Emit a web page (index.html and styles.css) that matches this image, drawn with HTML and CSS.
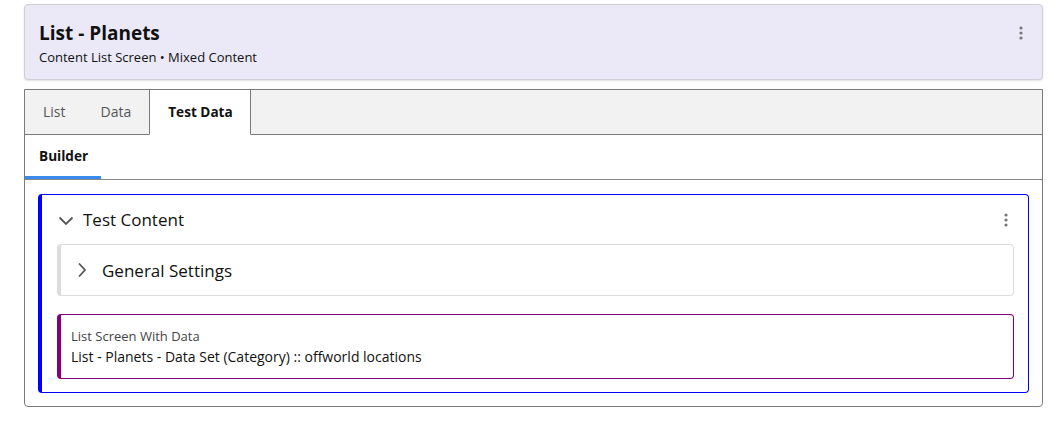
FILE: index.html
```html
<!DOCTYPE html>
<html>
<head>
<meta charset="utf-8">
<link rel="stylesheet" href="styles.css">
</head>
<body>
<div class="page">
  <div class="header">
    <div class="header-text">
      <div class="title">List - Planets</div>
      <div class="subtitle">Content List Screen • Mixed Content</div>
    </div>
    <svg class="kebab" width="4" height="14" viewBox="0 0 4 14"><circle cx="2" cy="2" r="1.6"/><circle cx="2" cy="7" r="1.6"/><circle cx="2" cy="12" r="1.6"/></svg>
  </div>

  <div class="tabs">
    <div class="tabbar">
      <div class="tab">List</div>
      <div class="tab">Data</div>
      <div class="tab active">Test Data</div>
      <div class="tab-fill"></div>
    </div>
    <div class="subtabs">
      <div class="subtab active">Builder</div>
    </div>
    <div class="body">
      <div class="block">
        <div class="block-head">
          <svg class="chev-down" width="16" height="10" viewBox="0 0 16 10"><path d="M1.5 1.5 L8 8 L14.5 1.5" fill="none" stroke="#555" stroke-width="1.8"/></svg>
          <div class="block-title">Test Content</div>
          <svg class="kebab" width="4" height="14" viewBox="0 0 4 14"><circle cx="2" cy="2" r="1.6"/><circle cx="2" cy="7" r="1.6"/><circle cx="2" cy="12" r="1.6"/></svg>
        </div>
        <div class="settings">
          <svg class="chev-right" width="10" height="16" viewBox="0 0 10 16"><path d="M2 1.5 L8 8 L2 14.5" fill="none" stroke="#555" stroke-width="1.8"/></svg>
          <div class="settings-title">General Settings</div>
        </div>
        <div class="ref">
          <div class="ref-label">List Screen With Data</div>
          <div class="ref-value">List - Planets - Data Set (Category) :: offworld locations</div>
        </div>
      </div>
    </div>
  </div>
</div>
</body>
</html>
```

FILE: styles.css
```css
* { box-sizing: border-box; }
body {
  margin: 0;
  font-family: "Open Sans", "Noto Sans", sans-serif;
  color: #111;
  background: #fff;
}
.page {
  padding: 4px 15px 0 24px;
}
.header {
  height: 76px;
  background: #ebe9f8;
  border: 1px solid #cfcfd6;
  border-radius: 4px;
  box-shadow: 0 1px 2px rgba(0,0,0,0.12);
  display: flex;
  align-items: flex-start;
  justify-content: space-between;
  padding: 16px 19px 0 14px;
}
.title {
  font-size: 19px;
  font-weight: 700;
  line-height: 25px;
}
.subtitle {
  font-size: 13px;
  line-height: 18px;
  margin-top: 2px;
}
.kebab { fill: #777; margin-top: 5px; }
.tabs {
  margin-top: 9px;
  border: 1px solid #7a7a7a;
  border-radius: 0 0 4px 4px;
  width: 1019px;
}
.tabbar {
  display: flex;
  height: 45px;
  background: #f2f2f2;
}
.tab {
  font-size: 14px;
  color: #555;
  padding: 0 18px;
  line-height: 44px;
  border-bottom: 1px solid #7a7a7a;
}
.tab:nth-child(2) { padding-left: 17px; }
.tab.active {
  background: #fff;
  color: #111;
  font-weight: 700;
  font-size: 13.6px;
  border: 1px solid #7a7a7a;
  border-top: none;
  border-bottom: 1px solid #fff;
  padding: 0 17px 0 18px;
}
.tab-fill { flex: 1; border-bottom: 1px solid #7a7a7a; }
.subtabs {
  display: flex;
  height: 45px;
  border-bottom: 1px solid #888;
}
.subtab {
  font-size: 13.6px;
  font-weight: 700;
  padding: 0 13px 0 14px;
  line-height: 42px;
  border-bottom: 3px solid transparent;
}
.subtab.active { border-bottom-color: #3b8bec; }
.body { padding: 14px 13px 13px 13px; }
.block {
  border: 1px solid #0000ff;
  border-left: 4px solid #0000ff;
  border-radius: 4px;
  padding: 0 14px 13px 15px;
}
.block-head {
  display: flex;
  align-items: center;
  height: 49px;
}
.chev-down { margin-left: 1px; margin-top: 2px; }
.block-title { font-size: 17px; margin-left: 9px; flex: 1; }
.block-head .kebab { margin-right: 6px; margin-top: 0; }
.settings {
  display: flex;
  align-items: center;
  height: 52px;
  border: 1px solid #dcdcdc;
  border-left: 4px solid #dcdcdc;
  border-radius: 4px;
}
.chev-right { margin-left: 16px; }
.settings-title { font-size: 17px; margin-left: 15px; }
.ref {
  margin-top: 18px;
  border: 1px solid #800080;
  border-left: 4px solid #800080;
  border-radius: 4px;
  padding: 12px 10px 10px 10px;
}
.ref-label { font-size: 13px; color: #444; line-height: 18px; }
.ref-value { font-size: 14px; line-height: 23px; }
```
